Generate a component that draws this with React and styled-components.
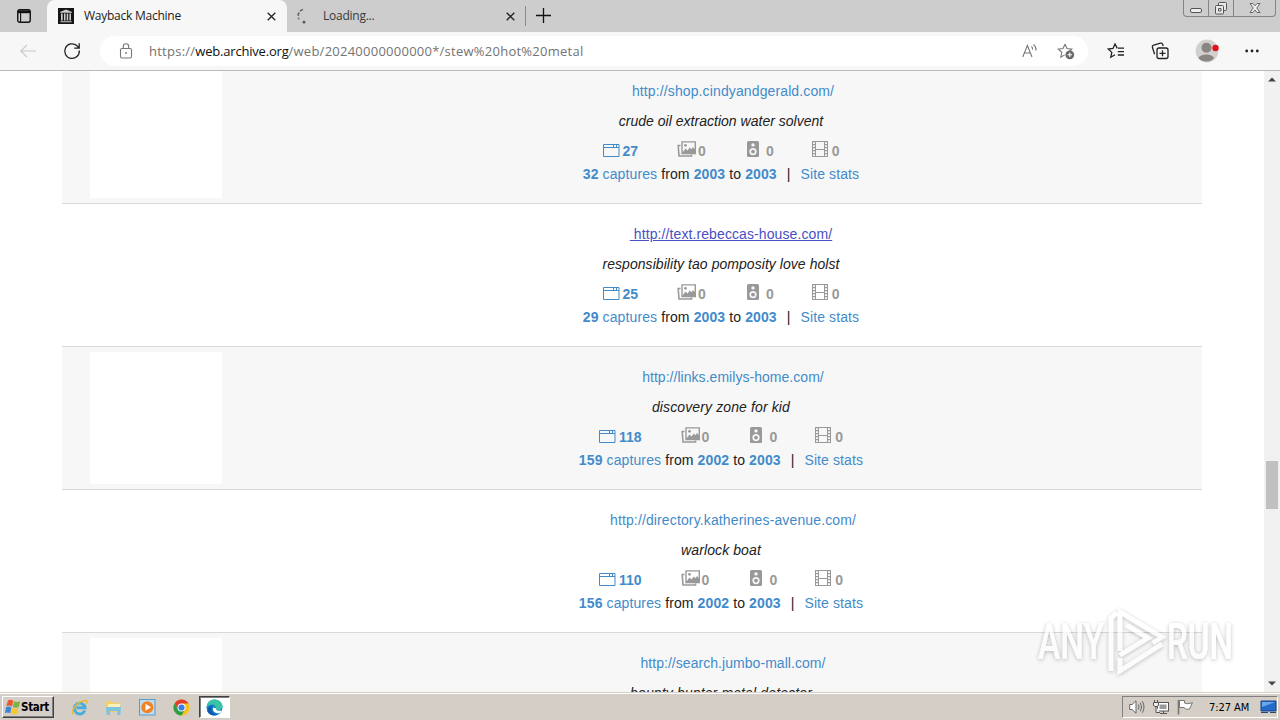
import React from "react";
import styled, { createGlobalStyle } from "styled-components";

const Global = createGlobalStyle`
  * { box-sizing: border-box; }
  html, body { margin: 0; padding: 0; overflow: hidden; background: #fff; }
  svg { display: block; flex: none; }
`;

const Screen = styled.div`
  position: relative;
  width: 1280px;
  height: 720px;
  overflow: hidden;
  display: flex;
  flex-direction: column;
  font-family: "Liberation Sans", Arial, sans-serif;
`;

/* ---------- browser chrome ---------- */

const TabStrip = styled.div`
  height: 32px;
  flex: none;
  display: flex;
  background: #cdcdcd;
  font: 12px/32px "Open Sans", "Noto Sans", sans-serif;
`;
const TabActions = styled.div`
  width: 47px;
  padding: 9px 0 0 17px;
`;
const Tab = styled.div`
  width: ${(p) => (p.$active ? 240 : 238)}px;
  height: 32px;
  display: flex;
  align-items: center;
  padding: 0 ${(p) => (p.$active ? 11 : 10)}px;
  border-radius: 8px 8px 0 0;
  background: ${(p) => (p.$active ? "#f7f7f7" : "transparent")};
  color: ${(p) => (p.$active ? "#1b1b1b" : "#3a3a3a")};
`;
const TabTitle = styled.span`
  flex: 1;
  margin-left: 10px;
  white-space: nowrap;
  letter-spacing: -0.25px;
`;
const TabDivider = styled.div`
  width: 1px;
  height: 20px;
  margin: 6px 10px 0 0;
  background: #8a8a8a;
`;
const NewTab = styled.div`
  padding-top: 8px;
`;
const WindowButtons = styled.div`
  margin-left: auto;
  margin-right: 4px;
  height: 17px;
  display: flex;
  border: 1px solid #858585;
  border-top: 0;
  border-radius: 0 0 4px 4px;
`;
const WindowButton = styled.div`
  width: ${(p) => p.$w}px;
  display: flex;
  justify-content: center;
  border-left: ${(p) => (p.$first ? "0" : "1px solid #858585")};
`;

const Toolbar = styled.div`
  height: 39px;
  flex: none;
  display: flex;
  align-items: center;
  background: #f7f7f7;
  border-bottom: 1px solid #b9b9b9;
`;
const NavButtons = styled.div`
  width: 100px;
  display: flex;
  gap: 26px;
  padding-left: 19px;
`;
const AddressBar = styled.div`
  width: 988px;
  height: 30px;
  display: flex;
  align-items: center;
  padding: 0 13px 0 19px;
  border-radius: 15px;
  background: #fff;
`;
const Address = styled.div`
  flex: 1;
  margin-left: 16px;
  font: 13px/20px "Open Sans", "Noto Sans", sans-serif;
  letter-spacing: 0.25px;
  color: #737373;
  white-space: nowrap;
`;
const Host = styled.span`
  color: #111;
  letter-spacing: -0.2px;
`;
const AddressIcons = styled.div`
  display: flex;
  gap: 18px;
`;
const ToolIcons = styled.div`
  flex: 1;
  display: flex;
  align-items: center;
  justify-content: space-between;
  padding: 0 21px 0 19px;
`;

/* ---------- page ---------- */

const Viewport = styled.div`
  height: 621px;
  flex: none;
  display: flex;
  overflow: hidden;
  background: #fff;
`;
const Page = styled.div`
  flex: 1;
  padding: 0 62px;
`;
const Results = styled.div`
  margin-top: -10px;
`;
const Result = styled.div`
  height: 143px;
  display: flex;
  padding: 5px 0 0 28px;
  border-bottom: 1px solid #d9d9d9;
  background: ${(p) => (p.$shaded ? "#f7f7f7" : "#fff")};
`;
const Thumb = styled.div`
  width: 132px;
  height: 132px;
  background: #fff;
`;
const Body = styled.div`
  flex: 1;
  margin-left: 18px;
  padding-top: 15px;
  font-size: 14px;
  line-height: 20px;
  text-align: center;
  color: #222;
  white-space: pre;
`;
const UrlLine = styled.div`
  padding-left: 20px;
`;
const SiteLink = styled.a`
  color: ${(p) => (p.$hover ? "#4b4fc4" : "#428bca")};
  text-decoration: ${(p) => (p.$hover ? "underline" : "none")};
  letter-spacing: ${(p) => p.$ls}px;
`;
const Description = styled.div`
  margin-top: 10px;
  font-style: italic;
  letter-spacing: ${(p) => p.$ls}px;
`;
const Counts = styled.div`
  margin-top: 10px;
  height: 20px;
  display: flex;
  justify-content: center;
`;
const Count = styled.div`
  display: flex;
  align-items: flex-start;
  gap: ${(p) => p.$gap}px;
  margin-right: ${(p) => p.$after || 0}px;
  font-weight: bold;
  font-size: 14px;
  color: ${(p) => (p.$main ? "#428bca" : "#999")};
`;
const Captures = styled.div`
  margin-top: 3px;
  letter-spacing: 0.11px;
`;
const Link = styled.a`
  color: #428bca;
`;
const Divider = styled.span`
  margin: 0 6px 0 10px;
`;
const Scrollbar = styled.div`
  width: 16px;
  display: flex;
  flex-direction: column;
  align-items: center;
  background: #f1f1f1;
  padding: 6px 0;
`;
const ScrollThumb = styled.div`
  width: 12px;
  height: 48px;
  margin-top: 379px;
  margin-bottom: auto;
  background: #c1c1c1;
`;
const Watermark = styled.svg`
  position: absolute;
  left: 1030px;
  top: 600px;
`;

/* ---------- taskbar ---------- */

const Taskbar = styled.div`
  height: 28px;
  flex: none;
  display: flex;
  align-items: flex-start;
  padding: 2px 2px 0;
  border-top: 1px solid #d5cec6;
  box-shadow: inset 0 1px 0 #fff;
  background: #d5cec6;
  font-family: "DejaVu Sans Condensed", "DejaVu Sans", sans-serif;
`;
const StartButton = styled.div`
  width: 52px;
  height: 22px;
  margin-top: 1px;
  display: flex;
  align-items: center;
  padding-left: 2px;
  border: 1px solid;
  border-color: #fff #404040 #404040 #fff;
  box-shadow: inset -1px -1px 0 #808080;
  font-size: 11.5px;
  font-weight: bold;
  letter-spacing: -0.3px;
  color: #000;
`;
const QuickLaunch = styled.div`
  display: flex;
  gap: 17px;
  padding: 4px 0 0 17px;
`;
const ActiveTask = styled.div`
  width: 31px;
  height: 22px;
  margin: 1px 0 0 9px;
  display: flex;
  justify-content: center;
  align-items: center;
  background: #fff;
  border: 1px solid;
  border-color: #404040 #fff #fff #404040;
  box-shadow: inset 1px 1px 0 #808080;
`;
const Tray = styled.div`
  width: 156px;
  height: 22px;
  margin-left: auto;
  margin-top: 1px;
  display: flex;
  align-items: center;
  padding-left: 6px;
  border: 1px solid;
  border-color: #808080 #fff #fff #808080;
`;
const TrayIcons = styled.div`
  display: flex;
  gap: 8px;
`;
const Clock = styled.div`
  flex: 1;
  padding-left: 16px;
  font-size: 11px;
  letter-spacing: -0.05px;
  color: #000;
  white-space: nowrap;
`;

/* ---------- icons ---------- */

const Close = ({ s = 9, c = "#222" }) => (
  <svg width={s} height={s} viewBox="0 0 9 9" stroke={c} strokeWidth="1.3" fill="none">
    <path d="M.7.7l7.6 7.6M8.3.7L.7 8.3" />
  </svg>
);
const TabActionsIcon = () => (
  <svg width="14" height="14" viewBox="0 0 14 14">
    <rect x=".75" y=".75" width="12.5" height="12.5" rx="2" fill="none" stroke="#111" strokeWidth="1.4" />
    <path d="M1 1.4h12v2.8H1z" fill="#111" />
    <path d="M3.6 4v9" stroke="#111" strokeWidth="1.1" />
  </svg>
);
const ArchiveIcon = () => (
  <svg width="16" height="16" viewBox="0 0 16 16">
    <rect width="16" height="16" fill="#151515" />
    <path d="M2 4l6-2.4L14 4v.8H2zM2.4 13.2h11.2v1H2.4zM3 5.5h1.7v7H3zM6 5.5h1.5v7H6zM8.7 5.5h1.5v7H8.700zM11.400 5.500H13v7h-1.600z" fill="#ccc" />
  </svg>
);
const Spinner = () => (
  <svg width="16" height="16" viewBox="0 0 16 16" fill="none" stroke="#666">
    <path d="M1.2 7.8A7 7 0 0 1 2 4.6M3 3.1A7 7 0 0 1 6 1.5" strokeWidth="1.8" />
    <circle cx="1.6" cy="10.6" r="1" fill="#777" stroke="none" />
    <circle cx="7" cy="14.2" r="1.4" fill="#555" stroke="none" />
  </svg>
);
const BackIcon = () => (
  <svg width="18" height="18" viewBox="0 0 18 18" fill="none" stroke="#c8c8c8" strokeWidth="1.2">
    <path d="M17 9H2M8 2.8L1.8 9 8 15.2" />
  </svg>
);
const ReloadIcon = () => (
  <svg width="18" height="18" viewBox="0 0 18 18" fill="none" stroke="#222" strokeWidth="1.3">
    <path d="M16.3 8.5A7.3 7.3 0 1 1 13.8 3.6L16 6M16.2 1.2v5h-5" />
  </svg>
);
const LockIcon = () => (
  <svg width="14" height="16" viewBox="0 0 14 16" fill="none" stroke="#777" strokeWidth="1.1">
    <rect x="1.5" y="5.5" width="11" height="9.5" rx="1.5" />
    <path d="M4.3 5.5V3.4a2.7 2.7 0 0 1 5.4 0v2.1" />
    <circle cx="7" cy="10" r=".9" fill="#777" stroke="none" />
  </svg>
);
const ReadAloudIcon = () => (
  <svg width="17" height="16" viewBox="0 0 17 16" fill="none" stroke="#777" strokeWidth="1.1">
    <path d="M.7 14L5.4 2.5 10 14M2.3 10h6.2M9.5 3.3a4 4 0 0 1 1 3.4M11.5 1.3a7 7 0 0 1 2.5 6.2" />
  </svg>
);
const star = "M8 1.2l2 4.4 4.8.5-3.6 3.2M8 1.2L6 5.6l-4.8.5 3.6 3.2-1 4.9 3.9-2.3";
const AddFavoriteIcon = () => (
  <svg width="18" height="17" viewBox="0 0 18 17" fill="none" stroke="#777" strokeWidth="1.1">
    <path d={star} />
    <circle cx="12.8" cy="11.8" r="4.4" fill="#686868" stroke="none" />
    <path d="M10.5 11.8h4.6M12.8 9.5v4.6" stroke="#fff" />
  </svg>
);
const FavoritesIcon = () => (
  <svg width="18" height="16" viewBox="0 0 18 16" fill="none" stroke="#222" strokeWidth="1.3">
    <path d="M10.3 5.4L8 1 6 5.4l-4.8.6 3.6 3.4-1 4.8 4.2-2.4M11 5.2h6M10.8 8.6H17M10.8 12H17" />
  </svg>
);
const CollectionsIcon = () => (
  <svg width="18" height="18" viewBox="0 0 18 18" fill="none" stroke="#222" strokeWidth="1.3">
    <rect x="6" y="6" width="11" height="10.5" rx="2" />
    <path d="M11.5 8.3v6M8.5 11.3h6M3.6 12.2L1.5 5.5A2 2 0 0 1 2.8 3L9.4 1.2A2 2 0 0 1 11.8 2.6l.4 1.4" />
  </svg>
);
const ProfileIcon = () => (
  <svg width="24" height="24" viewBox="0 0 24 24">
    <circle cx="12" cy="12" r="11.4" fill="#d2d0ce" />
    <circle cx="11.5" cy="8.8" r="5" fill="#888583" />
    <path d="M3.5 19.2c1.5-5 14-5 15.5 0A11 11 0 0 1 3.5 19.2z" fill="#888583" />
    <circle cx="20.5" cy="9" r="3.2" fill="#e3101a" />
  </svg>
);
const MoreIcon = () => (
  <svg width="14" height="4" viewBox="0 0 14 4" fill="#222">
    <circle cx="1.7" cy="2" r="1.4" />
    <circle cx="7" cy="2" r="1.4" />
    <circle cx="12.3" cy="2" r="1.4" />
  </svg>
);
const WebIcon = () => (
  <svg width="17" height="20" viewBox="0 0 17 20" fill="none" stroke="#428bca">
    <path d="M.5 3.5h15.500v12H.5zM0 6.500h16M10.500 3v3M13.500 3v3" />
  </svg>
);
const ImagesIcon = () => (
  <svg width="20" height="20" viewBox="0 0 20 20" fill="none" stroke="#999">
    <path d="M5 .9h13.300v11.600H5z" strokeWidth="1.4" />
    <path d="M3.5 4.5H1.200l.8 10.500h12.500v-1.500" strokeWidth="1.6" />
    <path d="M5.500 11.500l3-4 2 2 2.300-3 1.700 1.800L16 6l2 2.500v3.500H5.500z" fill="#999" stroke="none" />
    <circle cx="8.5" cy="4.3" r="1.4" fill="#999" stroke="none" />
  </svg>
);
const AudioIcon = () => (
  <svg width="12" height="20" viewBox="0 0 12 20">
    <rect width="12" height="16" rx="1.5" fill="#999" />
    <circle cx="6" cy="3.9" r="1.7" fill="#f7f7f7" />
    <circle cx="6" cy="10.6" r="3.6" fill="#f7f7f7" />
    <circle cx="6" cy="10.6" r="1.9" fill="#999" />
  </svg>
);
const VideoIcon = () => (
  <svg width="16" height="20" viewBox="0 0 16 20" fill="none" stroke="#999">
    <path d="M.5 0v16M3.5 0v16M12.5 0v16M15.5 0v16M4 .5h8M4 8.5h8M4 15.500h8" />
    <path d="M2 0v16M14 0v16" strokeWidth="2" strokeDasharray="1.2 1.8" />
  </svg>
);
const Arrow = ({ down }) => (
  <svg width="8" height="5" viewBox="0 0 8 5">
    <path d={down ? "M0 .5h8L4 4.5z" : "M0 4.5h8L4 .5z"} fill="#444" />
  </svg>
);

/* ---------- data ---------- */

const sites = [
  { url: "http://shop.cindyandgerald.com/", text: "crude oil extraction water solvent", pages: "27", captures: "32", from: "2003", urlLs: 0.12, textLs: 0.02 },
  { url: "http://text.rebeccas-house.com/", text: "responsibility tao pomposity love holst", pages: "25", captures: "29", from: "2003", hover: true, urlLs: 0.1, textLs: 0.05 },
  { url: "http://links.emilys-home.com/", text: "discovery zone for kid", pages: "118", captures: "159", from: "2002", urlLs: 0.04, textLs: 0.12 },
  { url: "http://directory.katherines-avenue.com/", text: "warlock boat", pages: "110", captures: "156", from: "2002", urlLs: 0.13, textLs: 0.1 },
  { url: "http://search.jumbo-mall.com/", text: "bounty hunter metal detector", urlLs: 0.05, textLs: 0.13 },
];

const SiteResult = ({ site, shaded }) => (
  <Result $shaded={shaded}>
    <Thumb />
    <Body>
      <UrlLine>
        <SiteLink $hover={site.hover} $ls={site.urlLs}>{"\u00a0" + site.url}</SiteLink>
      </UrlLine>
      <Description $ls={site.textLs}>{site.text}</Description>
      {site.pages && (
        <>
          <Counts>
            <Count $main $gap={3} $after={39}><WebIcon />{site.pages}</Count>
            <Count $gap={1} $after={41}><ImagesIcon />0</Count>
            <Count $gap={7} $after={38}><AudioIcon />0</Count>
            <Count $gap={4}><VideoIcon />0</Count>
          </Counts>
          <Captures>
            <Link><b>{site.captures}</b> captures</Link> from <Link><b>{site.from}</b></Link> to <Link><b>2003</b></Link>
            <Divider>|</Divider> <Link>Site stats</Link>
          </Captures>
        </>
      )}
    </Body>
  </Result>
);

export default function App() {
  return (
    <Screen>
      <Global />
      <TabStrip>
        <TabActions><TabActionsIcon /></TabActions>
        <Tab $active>
          <ArchiveIcon />
          <TabTitle>Wayback Machine</TabTitle>
          <Close />
        </Tab>
        <Tab>
          <Spinner />
          <TabTitle>Loading...</TabTitle>
          <Close />
        </Tab>
        <TabDivider />
        <NewTab>
          <svg width="15" height="15" viewBox="0 0 15 15" stroke="#111" strokeWidth="1.3"><path d="M7.5 0v15M0 7.5h15" /></svg>
        </NewTab>
        <WindowButtons>
          <WindowButton $w={24} $first>
            <svg width="14" height="16" viewBox="0 0 14 16"><rect x="1.5" y="8.5" width="11" height="4" rx="1.5" fill="#eee" stroke="#555" /></svg>
          </WindowButton>
          <WindowButton $w={25}>
            <svg width="14" height="16" viewBox="0 0 14 16" fill="#e8e8e8" stroke="#555"><rect x="4.5" y="2.5" width="8" height="8" rx="1" /><rect x="1.5" y="5.5" width="8" height="8.5" rx="1" /><path d="M4.5 8.5h2.5v2.5H4.5z" /></svg>
          </WindowButton>
          <WindowButton $w={42}>
            <svg width="12" height="16" viewBox="0 0 12 16"><path d="M1 3.5h3l2 2.3 2-2.3h3L7.8 8l3.2 4.5H8L6 10l-2 2.5H1L4.2 8z" fill="#eee" stroke="#666" /></svg>
          </WindowButton>
        </WindowButtons>
      </TabStrip>
      <Toolbar>
        <NavButtons><BackIcon /><ReloadIcon /></NavButtons>
        <AddressBar>
          <LockIcon />
          <Address>https://<Host>web.archive.org</Host>/web/20240000000000*/stew%20hot%20metal</Address>
          <AddressIcons><ReadAloudIcon /><AddFavoriteIcon /></AddressIcons>
        </AddressBar>
        <ToolIcons><FavoritesIcon /><CollectionsIcon /><ProfileIcon /><MoreIcon /></ToolIcons>
      </Toolbar>
      <Viewport>
        <Page>
          <Results>
            {sites.map((site, i) => <SiteResult key={site.url} site={site} shaded={i % 2 === 0} />)}
          </Results>
        </Page>
        <Scrollbar>
          <Arrow />
          <ScrollThumb />
          <Arrow down />
        </Scrollbar>
      </Viewport>
      <Taskbar>
        <StartButton>
          <svg width="16" height="16" viewBox="0 0 16 16">
            <path d="M3 1.5c2-1.2 3.5-1 5.2.2L7 7.5C5 6.3 3.5 6.3 1.3 7.2z" fill="#e8582b" />
            <path d="M9 2.2c2 1 3.5 1 6.2 0L13.8 8c-2 1-3.9.9-6-.1z" fill="#7cb342" />
            <path d="M1 8.3c2-1 3.7-.9 5.5.2l-1.3 5.7c-1.7-1-3.2-1.1-5.2-.2z" fill="#3d86d6" />
            <path d="M7.3 9c2 1 3.8 1 6.1 0L12 14.7c-2 1-4 .8-6-.1z" fill="#f8c62f" />
          </svg>
          Start
        </StartButton>
        <QuickLaunch>
          <svg width="17" height="17" viewBox="0 0 17 17" fill="none">
            <path d="M13.8 11.5A5.4 5.4 0 1 1 14.1 8.8H5.5" stroke="#49aede" strokeWidth="2.9" />
            <path d="M2.5 15.5C-1 13 5 4 12 2c4-1.2 4.5 0 3.5 2.5" stroke="#e8b930" strokeWidth="1.4" />
          </svg>
          <svg width="17" height="17" viewBox="0 0 17 17">
            <path d="M1 2h5l1.2 1.5H15V13H1z" fill="#efcf6e" />
            <path d="M3 5h12v3H3z" fill="#fbf0b5" />
            <path d="M1 8h15l-.7 8h-3v-4H5v4H1.7z" fill="#7fc4de" />
          </svg>
          <svg width="17" height="17" viewBox="0 0 17 17">
            <rect x=".5" y=".5" width="15.5" height="15.5" fill="#bcdcf0" stroke="#5c9bcb" />
            <circle cx="8.3" cy="8.3" r="6" fill="#f58220" />
            <path d="M6.5 4.8v7L12 8.3z" fill="#fff" />
          </svg>
          <svg width="17" height="17" viewBox="0 0 17 17">
            <circle cx="8.5" cy="8.5" r="8" fill="#fbc116" />
            <path d="M1.57 4.5A8 8 0 0 1 15.43 4.5H8.5L5 10.5z" fill="#e33b2e" />
            <path d="M1.57 4.5A8 8 0 0 0 8.5 16.5L12 10.5H5z" fill="#2b9c4a" />
            <circle cx="8.5" cy="8.5" r="4" fill="#fff" />
            <circle cx="8.5" cy="8.5" r="3.1" fill="#3b7de9" />
          </svg>
        </QuickLaunch>
        <ActiveTask>
          <svg width="17" height="17" viewBox="0 0 17 17">
            <circle cx="8.5" cy="8.5" r="8" fill="#1686cf" />
            <path d="M.6 8C1 3.5 4.5.5 8.5.5c5 0 8 3.5 8 6.5s-2.5 4-4.5 4-2.7-.8-2-1.8C10.5 6.5 6 3 .6 8z" fill="#3ac3a5" />
            <path d="M10 9.3c-1 1.2.8 3.2 5.8 2.2-1 1.8-2 2.7-2 2.7-4.3.8-8-2.2-6.6-5.7z" fill="#fff" />
            <path d="M5.5 9c-.5 4 3 7 6.5 6.5-3.5 2-8.500 1-10.500-3C1 9 3.500 6.500 7.500 6.700 6 7.500 5.500 8 5.500 9z" fill="#0d59a8" />
          </svg>
        </ActiveTask>
        <Tray>
          <TrayIcons>
            <svg width="16" height="16" viewBox="0 0 16 16" fill="#fff" stroke="#666">
              <path d="M.7 5.5h2.5L7 1.8v12.4L3.2 10.5H.7z" />
              <path d="M9.3 5.5q1.5 2.5 0 5M11.3 3.7q2.6 4.3 0 8.6M13.3 2.2q3.4 5.8 0 11.6" fill="none" />
            </svg>
            <svg width="16" height="16" viewBox="0 0 16 16" stroke="#555">
              <rect x="4.5" y="3.5" width="11" height="8.5" fill="#fff" />
              <path d="M6.5 5.5h7v4.5h-7z" fill="#999" stroke="none" />
              <path d="M7 14.5h7M10.5 12v2.5" />
              <path d="M.5 3.5h5v3l-1.5 1h-2l-1.5-1zM1.5 1v2.5M4.5 1v2.5M3 7.5v6h4" fill="#eee" />
            </svg>
            <svg width="16" height="16" viewBox="0 0 16 16" fill="#fff" stroke="#777">
              <path d="M2.5 1.5h5v2.5c2 1 4.5 1 8-.5l-3 6.5c-2 .5-4 .5-5.5-1.5H2.5z" />
              <path d="M1.5 1v14.5" strokeWidth="1.6" />
            </svg>
          </TrayIcons>
          <Clock>7:27 AM</Clock>
          <svg width="17" height="16" viewBox="0 0 17 16">
            <path d="M1 2h15v10H1z" fill="#246bc9" stroke="#17458c" />
            <path d="M2 3h13L2 8z" fill="#69a8ee" />
            <path d="M1 13.5h7M10 13.5h6" stroke="#28466e" />
          </svg>
        </Tray>
      </Taskbar>
      <Watermark width="212" height="84" viewBox="0 0 212 84">
        <defs>
          <filter id="halo" x="-20%" y="-20%" width="140%" height="150%">
            <feDropShadow dx="0" dy="1" stdDeviation="2" floodColor="#000" floodOpacity="0.36" />
          </filter>
        </defs>
        <g filter="url(#halo)" fill="#fff" opacity=".72" fontFamily="Roboto, sans-serif" fontSize="50" fontWeight="500">
          <text x="8" y="58.5" textLength="66" lengthAdjust="spacingAndGlyphs">ANY</text>
          <text x="137" y="58.5" textLength="66" lengthAdjust="spacingAndGlyphs">RUN</text>
          <g fill="none" stroke="#fff" strokeWidth="4.5">
            <path d="M81 71V18l6-5M90 51V12l42 25-9 6M96 25l22 13-28 17M90 58v13l42-27" />
          </g>
        </g>
      </Watermark>
    </Screen>
  );
}
